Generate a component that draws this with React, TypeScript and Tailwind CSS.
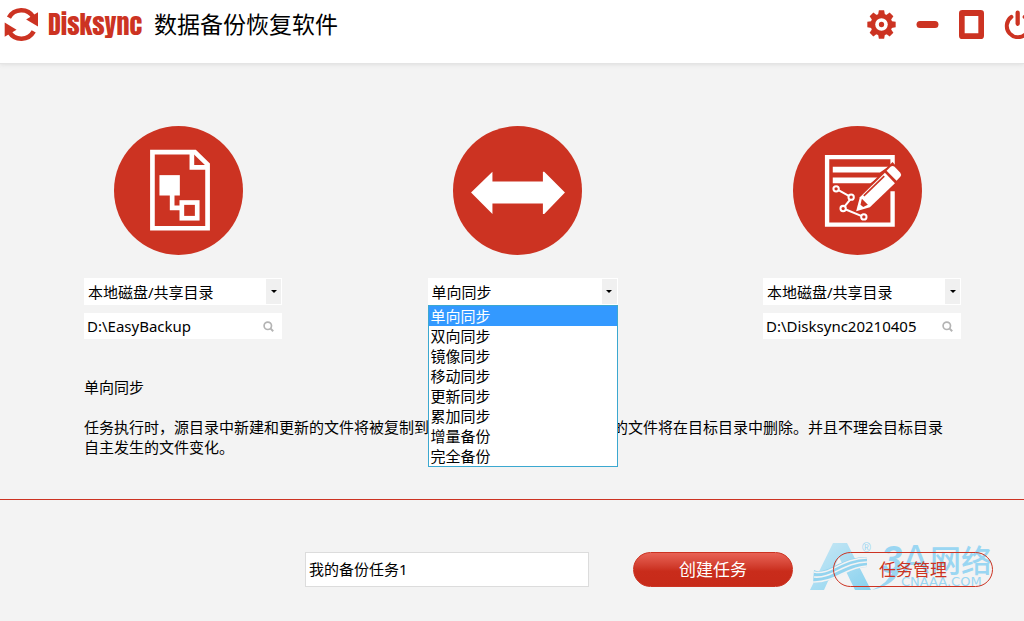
import { useState, type ReactNode } from 'react';

const RED = '#cc3322';
const MODES = ['单向同步', '双向同步', '镜像同步', '移动同步', '更新同步', '累加同步', '增量备份', '完全备份'];

function SyncLogo() {
  return (
    <svg viewBox="12 18 104 106" className="h-[35px] w-[35px]" fill="none" aria-hidden="true">
      <path d="M26 50 A43 43 0 0 1 100 48" stroke={RED} strokeWidth="14" />
      <path d="M114 34 V77 L78 56 Z" fill={RED} />
      <path d="M101 92 A43 43 0 0 1 27 94" stroke={RED} strokeWidth="14" />
      <path d="M13 65 V108 L49 87 Z" fill={RED} />
    </svg>
  );
}

function GearIcon() {
  return (
    <svg viewBox="-44 -44 88 88" className="size-[29px]" aria-hidden="true">
      {[0, 45, 90, 135].map((a) => (
        <path key={a} transform={`rotate(${a})`} d="M-11 -26 L-8 -43 H8 L11 -26 V26 L8 43 H-8 L-11 26 Z" fill={RED} />
      ))}
      <circle r="33" fill={RED} />
      <circle r="19" fill="#fff" />
      <circle r="8" fill={RED} />
    </svg>
  );
}

function MinimizeIcon() {
  return (
    <svg viewBox="0 0 69 22" className="h-[7px] w-[23px]" aria-hidden="true">
      <rect width="69" height="22" rx="11" fill={RED} />
    </svg>
  );
}

function MaximizeIcon() {
  return (
    <svg viewBox="0 0 75 87" className="h-[29px] w-[25px]" aria-hidden="true">
      <path fillRule="evenodd" fill={RED} d="M10 0 H65 Q75 0 75 10 V77 Q75 87 65 87 H10 Q0 87 0 77 V10 Q0 0 10 0 Z M17 18 V70 H58 V18 Z" />
    </svg>
  );
}

function PowerIcon() {
  return (
    <svg viewBox="461 26 84 88" className="h-[29px] w-[28px]" fill="none" stroke={RED} strokeLinecap="round" aria-hidden="true">
      <path d="M483 47 A34 34 0 1 0 523 47" strokeWidth="12" />
      <path d="M502 34 V68" strokeWidth="13" />
    </svg>
  );
}

function Disc({ children }: { children: ReactNode }) {
  return (
    <svg viewBox="40 34 386 386" className="mr-[10px] size-[129px] self-center" aria-hidden="true">
      <circle cx="233" cy="227" r="193" fill={RED} />
      {children}
    </svg>
  );
}

function SourceDisc() {
  return (
    <Disc>
      <g fill="none" stroke="#fff" strokeWidth="14">
        <path d="M155 112 H282 L320 149 V340 H155 Z" />
        <path d="M273 112 V158 H320" />
        <path d="M214 240 V279 H238" />
        <rect x="243" y="263" width="46" height="47" />
      </g>
      <rect x="176" y="181" width="61" height="61" fill="#fff" />
    </Disc>
  );
}

function DirectionDisc() {
  return (
    <Disc>
      <path d="M94 233 L158 171 V200 H309 V171 H313 L375 233 L313 297 H309 V266 H158 V297 Z" fill="#fff" />
    </Disc>
  );
}

function TargetDisc() {
  return (
    <Disc>
      <path d="M338 229 V329 H142 V127 H338 V150" fill="none" stroke="#fff" strokeWidth="13" />
      <path d="M159 156 H325 L300 173 H159 Z M159 188 H296 L272 205 H159 Z" fill="#fff" />
      <path d="M225 292 L235 244 L338 142 L372 182 L270 285 Z" fill={RED} />
      <path d="M229 289 L240 247 L315 174 L345 205 L270 277 Z" fill="#fff" />
      <path d="M320 168 L332 156 Q338 151 344 156 L361 174 Q366 180 361 186 L350 198 Z" fill="#fff" />
      <path d="M246 252 L242 270 L250 276 L264 270 Z" fill={RED} />
      <path d="M252 243 L313 184" stroke={RED} strokeWidth="5" />
      <g fill="none" stroke="#fff" strokeWidth="6">
        <path d="M176 226 L207 243 M211 254 L195 274 M198 284 L244 303" />
        <circle cx="169" cy="222" r="8" />
        <circle cx="214" cy="247" r="8" />
        <circle cx="190" cy="281" r="8" />
        <circle cx="252" cy="306" r="8" />
      </g>
    </Disc>
  );
}

type PickerProps = { label: string; value: string; options: string[]; onChange: (v: string) => void };

function Picker({ label, value, options, onChange }: PickerProps) {
  return (
    <div className="relative mt-[23px]">
      <select
        aria-label={label}
        value={value}
        onChange={(e) => onChange(e.target.value)}
        className="block h-[27px] w-full appearance-none bg-white pl-1 text-[15px] outline-none"
      >
        {options.map((o) => (
          <option key={o}>{o}</option>
        ))}
      </select>
      <span className="pointer-events-none absolute inset-y-px right-px flex w-[15px] items-center justify-center bg-[#f0f0f0]">
        <svg viewBox="0 0 6 3" className="h-[3px] w-[6px]" aria-hidden="true">
          <path d="M0 0 H6 L3 3 Z" fill="#000" />
        </svg>
      </span>
    </div>
  );
}

function PathBox({ label, initial }: { label: string; initial: string }) {
  return (
    <div className="mt-2 flex h-[26px] items-center bg-white pr-2">
      <input aria-label={label} defaultValue={initial} className="h-full min-w-0 flex-1 pb-px pl-[3px] text-[15px] outline-none" />
      <button type="button" aria-label="浏览">
        <svg viewBox="0 0 11 11" className="size-[11px]" fill="none" stroke="#b4b4b4" aria-hidden="true">
          <circle cx="4.8" cy="4.8" r="3.7" strokeWidth="1.7" />
          <path d="M7.4 7.4 L10.2 10.2" strokeWidth="2" />
        </svg>
      </button>
    </div>
  );
}

function Watermark() {
  return (
    <svg viewBox="0 0 184 52" className="pointer-events-none absolute -top-3 -right-px h-[52px] w-[184px]" aria-hidden="true">
      <defs>
        <linearGradient id="peak" x1="0" y1="0" x2="1" y2="1">
          <stop offset="0" stopColor="#c5e8f6" />
          <stop offset="1" stopColor="#74cbee" />
        </linearGradient>
      </defs>
      <g opacity="0.85">
        <path d="M23 3 H37 L61 50 H45 L29 17 L14 50 H0 Z" fill="url(#peak)" />
        <path d="M4 30 C16 36 30 17 57 17 L57 27 C36 27 24 44 3 43 Z" fill="#84cfef" />
        <g fill="none" stroke="#f3f3f3" strokeWidth="1.6">
          <path d="M4 32 C20 36 32 18 57 18" />
          <path d="M4 37 C22 39 34 22 57 22" />
          <path d="M3 42 C24 43 36 27 57 26" />
        </g>
      </g>
      <g fill="#84d0f2" opacity="0.8" fontFamily="'Noto Sans CJK SC', sans-serif">
        <text x="52" y="12" fontSize="12" fontFamily="'Liberation Sans', sans-serif">®</text>
        <text x="71" y="33" fontSize="38" fontStyle="italic" fontWeight="bold" fontFamily="'Liberation Sans', sans-serif">3</text>
        <text x="92" y="33" fontSize="40" fontFamily="'Liberation Sans', sans-serif">A</text>
        <text x="120" y="32" fontSize="31" fontWeight="500">网络</text>
        <text x="91" y="46" fontSize="13" fontFamily="'DejaVu Sans', sans-serif">CNAAA.COM</text>
        <path d="M91 27 Q86 45 62 50 Q78 44 84 29 Z" />
      </g>
    </svg>
  );
}

export default function App() {
  const [mode, setMode] = useState(MODES[0]);
  const [source, setSource] = useState('本地磁盘/共享目录');
  const [target, setTarget] = useState('本地磁盘/共享目录');
  const places = ['本地磁盘/共享目录'];

  return (
    <div className="min-h-screen overflow-x-hidden bg-[#f3f3f3] font-['Noto_Sans','Noto_Sans_CJK_SC',sans-serif] text-[15px] leading-5 text-black">
      <header className="flex h-16 items-start justify-between border-b border-[#e4e4e4] bg-white shadow-[0_1px_4px_#e0e0e0]">
        <div className="flex h-12 items-center pl-1">
          <SyncLogo />
          <span className="ml-[9px] w-[94px] font-['Impact','Anton','Roboto_Condensed','Open_Sans_Condensed','Roboto',sans-serif] text-[26px] leading-8 font-normal text-[#cc3322]">
            Disksync
          </span>
          <h1 className="ml-3 text-[23px] leading-8">数据备份恢复软件</h1>
        </div>
        <nav className="-mr-2 flex h-12 shrink-0 items-center gap-5">
          <button type="button" aria-label="设置"><GearIcon /></button>
          <button type="button" aria-label="最小化"><MinimizeIcon /></button>
          <button type="button" aria-label="最大化"><MaximizeIcon /></button>
          <button type="button" aria-label="退出"><PowerIcon /></button>
        </nav>
      </header>

      <main className="pt-[62px] pr-[63px] pl-[84px]">
        <div className="flex justify-between">
          <section className="flex w-[198px] flex-col">
            <SourceDisc />
            <Picker label="源位置" value={source} options={places} onChange={setSource} />
            <PathBox label="源目录" initial="D:\EasyBackup" />
          </section>
          <section className="relative flex w-[190px] flex-col">
            <DirectionDisc />
            <Picker label="同步方式" value={mode} options={MODES} onChange={setMode} />
            <ul role="listbox" aria-label="同步方式" className="absolute inset-x-0 top-[179px] z-10 border border-[#3ba8d0] bg-white">
              {MODES.map((m) => (
                <li
                  key={m}
                  role="option"
                  aria-selected={m === mode}
                  onClick={() => setMode(m)}
                  className="h-5 pl-0.5 leading-5 aria-selected:bg-[#3399ff] aria-selected:text-white"
                >
                  {m}
                </li>
              ))}
            </ul>
          </section>
          <section className="flex w-[198px] flex-col">
            <TargetDisc />
            <Picker label="目标位置" value={target} options={places} onChange={setTarget} />
            <PathBox label="目标目录" initial="D:\Disksync20210405" />
          </section>
        </div>
        <h2 className="mt-[38px]">{mode}</h2>
        <p className="mt-5 pr-3 pb-[42px]">
          任务执行时，源目录中新建和更新的文件将被复制到目标目录中， 源目录中删除的文件将在目标目录中删除。并且不理会目标目录自主发生的文件变化。
        </p>
      </main>

      <footer className="flex justify-end border-t border-[#cc3322] pt-[52px] pr-[31px]">
        <input
          aria-label="任务名称"
          defaultValue="我的备份任务1"
          className="h-[35px] w-[284px] border border-[#dcdcdc] bg-white pb-0.5 pl-[3px] text-[15px] outline-none"
        />
        <button type="button" className="ml-11 h-[35px] w-40 rounded-full border border-[#cc3322] bg-linear-to-b from-[#e86255] via-[#c92c1b] via-55% to-[#c72a19] text-[17px] text-white">
          创建任务
        </button>
        <div className="relative ml-10">
          <Watermark />
          <button type="button" className="relative block h-[35px] w-40 rounded-full border border-[#cc3322] text-[17px] text-[#cc3322]">
            任务管理
          </button>
        </div>
      </footer>
    </div>
  );
}
